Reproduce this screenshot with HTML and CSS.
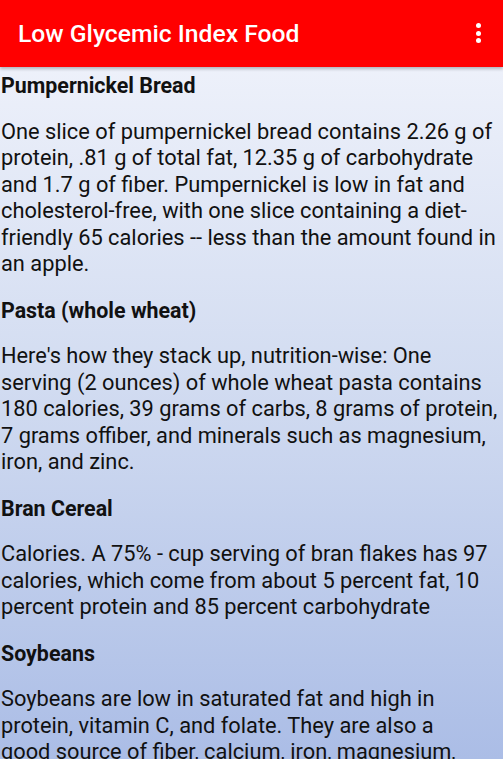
FILE: index.html
```html
<!DOCTYPE html>
<html lang="en">
<head>
    <meta charset="UTF-8">
    <title>Low Glycemic Index Food</title>
    <link rel="stylesheet" href="styles.css">
</head>
<body>

<div class="app">
    <div class="toolbar">
        <div class="toolbar-title">Low Glycemic Index Food</div>
        <div class="menu-btn">
            <span class="menu-dot"></span>
            <span class="menu-dot"></span>
            <span class="menu-dot"></span>
        </div>
    </div>

    <div class="content">
        <div class="food-title">Pumpernickel Bread</div>
        <p class="food-text">One slice of pumpernickel bread contains 2.26 g of protein, .81 g of total fat, 12.35 g of carbohydrate and 1.7 g of fiber. Pumpernickel is low in fat and cholesterol-free, with one slice containing a diet-friendly 65 calories -- less than the amount found in an apple.</p>

        <div class="food-title">Pasta (whole wheat)</div>
        <p class="food-text">Here's how they stack up, nutrition-wise: One serving (2 ounces) of whole wheat pasta contains 180 calories, 39 grams of carbs, 8 grams of protein, 7 grams offiber, and minerals such as magnesium, iron, and zinc.</p>

        <div class="food-title">Bran Cereal</div>
        <p class="food-text">Calories. A 75% - cup serving of bran flakes has 97 calories, which come from about 5 percent fat, 10 percent protein and 85 percent carbohydrate</p>

        <div class="food-title">Soybeans</div>
        <p class="food-text">Soybeans are low in saturated fat and high in protein, vitamin C, and folate. They are also a<br>good source of fiber, calcium, iron, magnesium, phosphorus, potassium and thiamine.</p>
    </div>
</div>

</body>
</html>
```

FILE: styles.css
```css
html, body {
    margin: 0;
    padding: 0;
    height: 100%;
}

body {
    font-family: Roboto, "Noto Sans", sans-serif;
    overflow: hidden;
}

.app {
    height: 100vh;
    display: flex;
    flex-direction: column;
    background: linear-gradient(to bottom, #f3f5fc 0%, #d2dcf1 50%, #abbde6 100%);
    overflow: hidden;
}

.toolbar {
    height: 67px;
    flex-shrink: 0;
    background: #ff0000;
    display: flex;
    align-items: center;
    justify-content: space-between;
    padding: 0 22px 0 18px;
    box-shadow: 0 2px 3px rgba(0, 0, 0, 0.25);
    position: relative;
    z-index: 1;
}

.toolbar-title {
    color: #fff;
    font-size: 24.7px;
    font-weight: 500;
}

.menu-btn {
    display: flex;
    flex-direction: column;
    gap: 2.5px;
    margin-top: -1px;
}

.menu-dot {
    width: 5px;
    height: 5px;
    border-radius: 50%;
    background: #fff;
}

.content {
    padding: 6px 0 0 1px;
    color: #111;
}

.food-title {
    font-size: 21.4px;
    font-weight: 700;
    line-height: 26.5px;
    margin-bottom: 19px;
}

.food-text {
    font-size: 21.8px;
    line-height: 26.5px;
    margin: 0 0 20px;
}
```
